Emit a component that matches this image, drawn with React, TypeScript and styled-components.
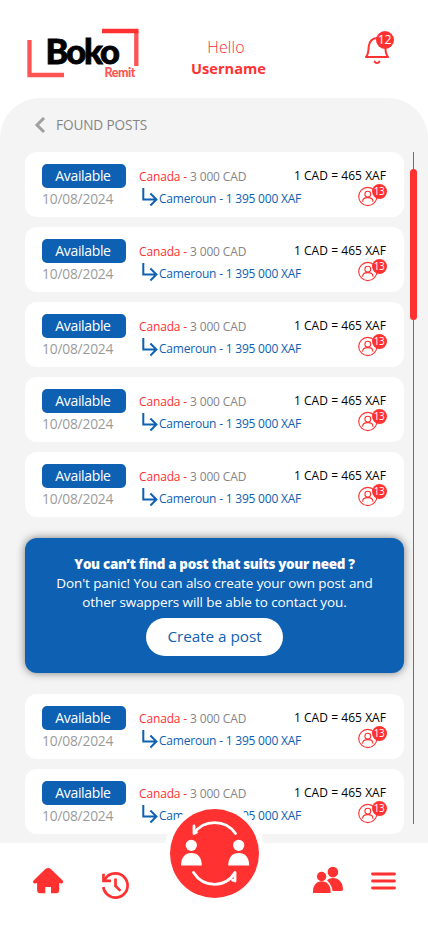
import React from "react";
import styled, { createGlobalStyle } from "styled-components";

const RED = "#ff3131";
const BLUE = "#0e60b2";

const GlobalStyle = createGlobalStyle`
  * { box-sizing: border-box; }
  html, body { margin: 0; padding: 0; background: #fff; }
  body { font-family: "Open Sans", "Noto Sans", sans-serif; }
  button { font-family: inherit; border: 0; padding: 0; }
`;

const Screen = styled.div`
  width: 428px;
  height: 926px;
  display: flex;
  flex-direction: column;
  overflow: hidden;
  background: #fff;
`;

const Header = styled.header`
  height: 98px;
  flex: none;
  display: grid;
  grid-template-columns: 145px 167px 1fr;
`;

const LogoSvg = styled.svg`
  margin: 24px 0 0 20px;
`;

const Greeting = styled.div`
  padding-top: 37px;
  text-align: center;
  color: ${RED};
  line-height: 21px;
`;

const Hello = styled.div`
  padding-right: 5px;
  font-size: 16px;
  font-weight: 300;
  letter-spacing: 0.1px;
`;

const Username = styled.div`
  font-size: 14.6px;
  font-weight: 700;
`;

const Bell = styled.div`
  position: relative;
  width: 34px;
  height: 36px;
  margin: 30px 0 0 51px;
  svg { display: block; }
`;

const Count = styled.span<{ $size: number; $x: number; $y: number; $font: number }>`
  position: absolute;
  left: ${(p) => p.$x}px;
  top: ${(p) => p.$y}px;
  width: ${(p) => p.$size}px;
  height: ${(p) => p.$size}px;
  padding-right: 1px;
  border-radius: 50%;
  background: ${RED};
  color: #fff;
  font-size: ${(p) => p.$font}px;
  line-height: ${(p) => p.$size - 1}px;
  letter-spacing: -0.4px;
  text-align: center;
  font-weight: 500;
`;

const Panel = styled.main`
  height: 745px;
  flex: none;
  background: #f4f4f4;
  border-radius: 40px 40px 0 0;
`;

const TitleRow = styled.div`
  height: 54px;
  display: flex;
  align-items: center;
  gap: 10px;
  padding-left: 34px;
  color: #858585;
  font-size: 13.6px;
  line-height: 18px;
  letter-spacing: -0.1px;
`;

const Content = styled.div`
  display: flex;
  padding-left: 25px;
`;

const Posts = styled.div`
  width: 379px;
  display: flex;
  flex-direction: column;
  gap: 10px;
`;

const ScrollTrack = styled.div`
  width: 7px;
  height: 672px;
  margin-left: 6px;
  padding-top: 17px;
  background: linear-gradient(${RED}, ${RED}) center / 1px 100% no-repeat;
`;

const ScrollThumb = styled.div`
  height: 151px;
  border-radius: 4px;
  background: ${RED};
`;

const Card = styled.article`
  height: 65px;
  flex: none;
  display: flex;
  padding: 12px 18px 0 17px;
  border-radius: 12px;
  background: #fff;
`;

const Status = styled.div`
  width: 97px;
  flex: none;
`;

const Badge = styled.div`
  width: 84px;
  height: 24px;
  padding-right: 2px;
  border-radius: 5px;
  background: ${BLUE};
  color: #fff;
  text-align: center;
  font-size: 14px;
  line-height: 24px;
  letter-spacing: -0.35px;
`;

const PostDate = styled.div`
  margin-top: 1px;
  font-size: 13.8px;
  line-height: 20px;
  letter-spacing: -0.2px;
  color: #9b9b9b;
`;

const Transfer = styled.div`
  width: 150px;
  flex: none;
  font-size: 12px;
  white-space: nowrap;
`;

const Source = styled.div`
  height: 24px;
  line-height: 26px;
  color: #858585;
  letter-spacing: -0.15px;
  span { color: ${RED}; }
`;

const Destination = styled.div`
  display: flex;
  height: 20px;
  padding-left: 3px;
  color: ${BLUE};
  line-height: 22px;
  letter-spacing: -0.21px;
  svg { flex: none; margin-right: 1px; }
`;

const Offer = styled.div`
  flex: 1;
`;

const Rate = styled.div`
  display: flex;
  justify-content: flex-end;
  white-space: nowrap;
  font-size: 12px;
  line-height: 24px;
  height: 19px;
  letter-spacing: 0.05px;
  color: #000;
`;

const Interested = styled.div`
  position: relative;
  width: 30px;
  height: 24px;
  margin: 0 -2px 0 auto;
  svg { display: block; }
`;

const Promo = styled.section`
  height: 135px;
  flex: none;
  margin: 11px 0;
  padding-top: 17px;
  display: flex;
  flex-direction: column;
  align-items: center;
  border-radius: 12px;
  background: ${BLUE};
  box-shadow: 0 0 8px rgba(0, 0, 0, 0.5);
  color: #fff;
  font-size: 13.5px;
  line-height: 19px;
  text-align: center;
`;

const PromoTitle = styled.strong`
  font-size: 13.4px;
  font-weight: 800;
  letter-spacing: -0.3px;
`;

const PromoText = styled.p`
  margin: 0 0 6px;
  letter-spacing: -0.1px;
`;

const CreateButton = styled.button`
  width: 137px;
  height: 38px;
  padding-bottom: 2px;
  border-radius: 19px;
  background: #fff;
  color: ${BLUE};
  font-size: 15.3px;
  letter-spacing: -0.05px;
`;

const Nav = styled.nav`
  position: relative;
  height: 83px;
  flex: none;
  display: flex;
  background: #fff;
  > svg { flex: none; }
`;

const HomeSvg = styled.svg`margin: 24px 0 0 32px;`;
const HistorySvg = styled.svg`margin: 28px 0 0 37px;`;
const PeopleSvg = styled.svg`margin: 22px 0 0 182px;`;
const MenuSvg = styled.svg`margin: 28px 0 0 27px;`;

const SwapButton = styled.button`
  position: absolute;
  left: 164px;
  top: -40px;
  width: 101px;
  height: 101px;
  border-radius: 50%;
  background: #fff;
  svg { display: block; }
`;

const LogoName = styled.text`
  font: 900 34.5px Lato, sans-serif;
  letter-spacing: -2px;
  stroke: #000;
  stroke-width: 0.8px;
`;

const LogoTag = styled.text`
  font: 900 12.5px Lato, sans-serif;
  letter-spacing: -0.5px;
  fill: #ff5454;
`;

const Logo = () => (
  <LogoSvg width="122" height="60" viewBox="20 24 122 60">
    <path d="M29.5 40v35H64" fill="none" stroke="#ff5454" strokeWidth="4.3" />
    <path d="M136.300 31v35" fill="none" stroke="#ff5454" strokeWidth="4.3" />
    <path d="M102 31h36.500" fill="none" stroke={RED} strokeWidth="4.3" />
    <LogoName x="45.500" y="63.700">Boko</LogoName>
    <LogoTag x="104.500" y="77">Remit</LogoTag>
  </LogoSvg>
);

const BellIcon = () => (
  <svg width="34" height="36" viewBox="363 30 34 36" fill="none" stroke={RED} strokeWidth="2" strokeLinecap="round" strokeLinejoin="round">
    <path d="M366 57c2.800-3 2.300-7 2.800-11 .5-4.600 3.800-8 8.200-8s7.700 3.400 8.200 8c.5 4 0 8 2.800 11z" />
    <path d="M374.700 61.600c.8 2 3.800 2 4.600 0" />
  </svg>
);

const TurnArrow = () => (
  <svg width="16" height="19" viewBox="0 0 16 19" fill="none" stroke={BLUE} strokeWidth="2">
    <path d="M1.300 0v11.500h12.500M8.400 5.500l6 6-6 6" />
  </svg>
);

const UserIcon = () => (
  <svg width="20" height="24" viewBox="0 0 20 24" fill="none" stroke={RED} strokeWidth="1.1">
    <circle cx="9.800" cy="13.500" r="9.100" />
    <circle cx="9.800" cy="11.200" r="2.900" />
    <path d="M4.700 18.800v-.6c0-2.200 2-3.600 5.100-3.600s5.100 1.400 5.100 3.600v.6" />
  </svg>
);

const Post = () => (
  <Card>
    <Status>
      <Badge>Available</Badge>
      <PostDate>10/08/2024</PostDate>
    </Status>
    <Transfer>
      <Source><span>Canada -</span> 3 000 CAD</Source>
      <Destination><TurnArrow />Cameroun - 1 395 000 XAF</Destination>
    </Transfer>
    <Offer>
      <Rate>1 CAD = 465 XAF</Rate>
      <Interested>
        <UserIcon />
        <Count $size={15} $x={14} $y={1} $font={10}>13</Count>
      </Interested>
    </Offer>
  </Card>
);

const SwapIcon = () => (
  <svg width="101" height="101" viewBox="164 803 101 101">
    <circle cx="214.500" cy="853.500" r="44.500" fill={RED} />
    <g fill="none" stroke="#fff" strokeWidth="2.800" strokeLinecap="round" strokeLinejoin="round">
      <path d="M235.500 833.500c-10-14.500-32-14.500-41.500 0V826M194 833.500l2.500-1.200" />
      <path d="M193.500 872.500c10 15.700 32 15.700 41.500 0V881l-2.500-.800" />
    </g>
    <g fill="#fff">
      <circle cx="191.300" cy="845.300" r="5.600" />
      <path d="M181 865.500c0-8 4-12.500 10.400-12.500s10.400 4.500 10.400 12.500z" />
      <circle cx="238.700" cy="845.300" r="5.600" />
      <path d="M228.200 865.500c0-8 4-12.500 10.500-12.500s10.500 4.500 10.500 12.500z" />
    </g>
  </svg>
);

const HomeIcon = () => (
  <HomeSvg width="32" height="28" viewBox="32 867 32 28">
    <path fill={RED} d="M45.400 869.100c1.600-1.500 3.800-1.500 5.400 0L62.700 880.500c1.200 1.300-.1 3.400-1.700 2.900l-1.800-.4v7.200c0 1.800-1.300 3-3 3H51v-6.200h-5.700v6.200h-5.200c-1.800 0-3-1.200-3-3V883l-1.900.4c-1.700.5-2.900-1.600-1.700-2.900z" />
  </HomeSvg>
);

const HistoryIcon = () => (
  <HistorySvg width="29" height="29" viewBox="101 871 29 29" fill="none" stroke={RED} strokeWidth="2.700">
    <path d="M103.300 887c.8 6 6 10.600 12.200 10.600 6.700 0 12.100-5.400 12.100-12.100s-5.400-12.100-12.100-12.100c-4.800 0-8.900 2.700-10.900 6.700" />
    <path d="M103.500 873.700v7.200h7.500M115.500 878.500v7.400l5 5" />
  </HistorySvg>
);

const PeopleIcon = () => (
  <PeopleSvg width="32" height="30" viewBox="312 865 32 30" fill={RED}>
    <circle cx="332.900" cy="872.100" r="5.300" />
    <path d="M327 880.300c2-1.500 3.800-2.200 6.100-2.200 5.700 0 9.900 4.700 9.900 11 0 1.300-.6 1.900-1.800 1.900h-8.600c-.7-4.400-2.500-8-5.600-10.700z" />
    <circle cx="321.600" cy="876.500" r="4.700" />
    <path d="M313 892.900v-2c0-5.600 3.700-9.700 8.700-9.700s8.900 4.100 8.900 9.700v2z" />
  </PeopleSvg>
);

const MenuIcon = () => (
  <MenuSvg width="25" height="20" viewBox="0 0 25 20" stroke={RED} strokeWidth="2.800" strokeLinecap="round">
    <path d="M1.500 3h22M1.500 10h22M1.500 17h22" />
  </MenuSvg>
);

export default function App() {
  return (
    <Screen>
      <GlobalStyle />
      <Header>
        <Logo />
        <Greeting>
          <Hello>Hello</Hello>
          <Username>Username</Username>
        </Greeting>
        <Bell>
          <BellIcon />
          <Count $size={18} $x={13} $y={1} $font={12.3}>12</Count>
        </Bell>
      </Header>
      <Panel>
        <TitleRow>
          <svg width="12" height="16" viewBox="0 0 12 16" fill="none" stroke="#a0a0a0" strokeWidth="3">
            <path d="M10 1 3 8l7 7" />
          </svg>
          FOUND POSTS
        </TitleRow>
        <Content>
          <Posts>
            {[0, 1, 2, 3, 4].map((i) => <Post key={i} />)}
            <Promo>
              <PromoTitle>You can’t find a post that suits your need ?</PromoTitle>
              <PromoText>Don't panic! You can also create your own post and<br />other swappers will be able to contact you.</PromoText>
              <CreateButton>Create a post</CreateButton>
            </Promo>
            <Post />
            <Post />
          </Posts>
          <ScrollTrack><ScrollThumb /></ScrollTrack>
        </Content>
      </Panel>
      <Nav>
        <HomeIcon />
        <HistoryIcon />
        <PeopleIcon />
        <MenuIcon />
        <SwapButton aria-label="Swap"><SwapIcon /></SwapButton>
      </Nav>
    </Screen>
  );
}
